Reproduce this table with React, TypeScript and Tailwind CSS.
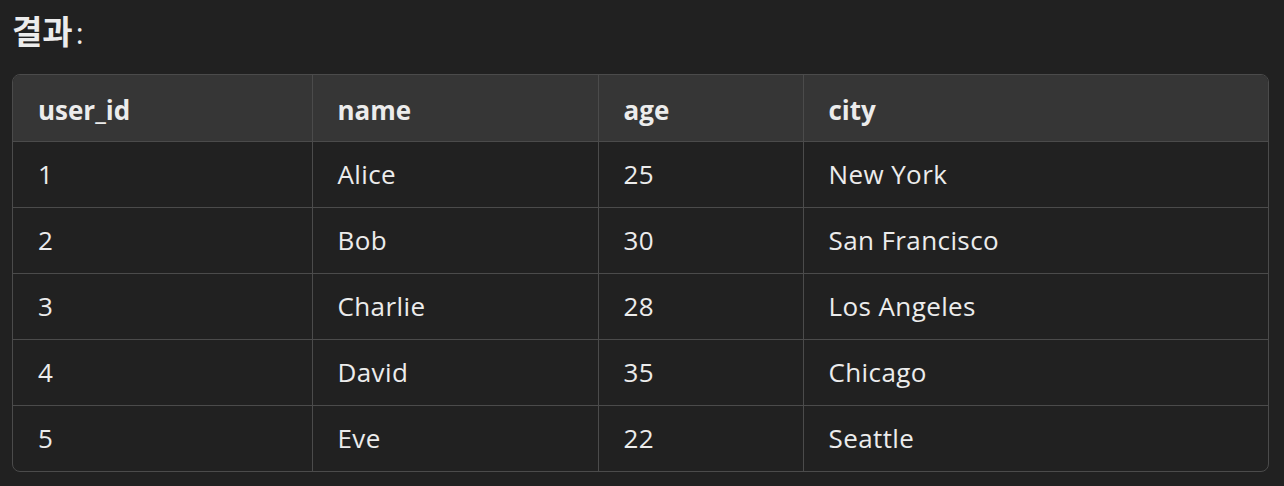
import React from "react";

const rows = [
  ["1", "Alice", "25", "New York"],
  ["2", "Bob", "30", "San Francisco"],
  ["3", "Charlie", "28", "Los Angeles"],
  ["4", "David", "35", "Chicago"],
  ["5", "Eve", "22", "Seattle"],
];

const widths = ["w-[299px]", "w-[286px]", "w-[205px]", "w-auto"];

export default function App() {
  return (
    <div
      className="w-[1284px] h-[486px] bg-[#212121] text-[#ececec] px-3 pt-[10px]"
      style={{ fontFamily: '"Open Sans", "Noto Sans CJK KR", sans-serif' }}
    >
      <div className="text-[33px] leading-[40px] pl-0 flex items-baseline">
        <span className="font-bold" style={{ fontFamily: '"Noto Sans CJK KR", sans-serif' }}>
          결과
        </span>
        <span className="text-[30px] ml-[3px]">:</span>
      </div>
      <div className="mt-[21px] w-[1257px] border-[1.5px] border-[#4b4b4b] rounded-[8px] overflow-hidden">
        <table className="w-full border-collapse table-fixed">
          <thead>
            <tr className="bg-[#363636] h-[66px]">
              {["user_id", "name", "age", "city"].map((h, i) => (
                <th
                  key={h}
                  className={`${widths[i]} text-left font-bold text-[26px] pl-[25px] pt-[5px] ${i < 3 ? "border-r-[1.5px] border-[#4b4b4b]" : ""}`}
                >
                  {h}
                </th>
              ))}
            </tr>
          </thead>
          <tbody>
            {rows.map((r, ri) => (
              <tr key={ri} className="h-[66px] border-t-[1.5px] border-[#4b4b4b]">
                {r.map((c, i) => (
                  <td
                    key={i}
                    className={`text-[26px] tracking-[0.4px] pl-[25px] ${i < 3 ? "border-r-[1.5px] border-[#4b4b4b]" : ""}`}
                  >
                    {c}
                  </td>
                ))}
              </tr>
            ))}
          </tbody>
        </table>
      </div>
    </div>
  );
}
